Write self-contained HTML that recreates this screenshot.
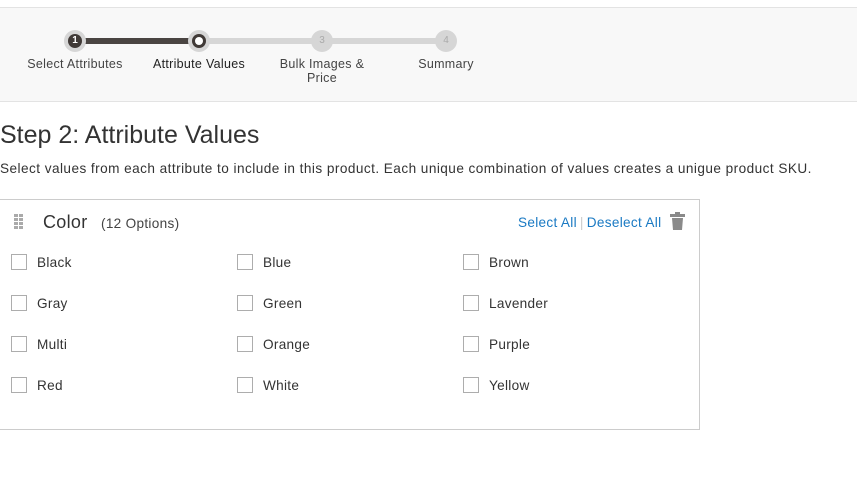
<!DOCTYPE html>
<html><head><meta charset="utf-8"><style>
*{box-sizing:border-box;margin:0;padding:0}
body{width:857px;height:494px;background:#fff;font-family:"Liberation Sans",sans-serif;color:#303030;position:relative;overflow:hidden}
.band{position:absolute;left:0;top:7px;width:857px;height:95px;background:#f8f8f8;border-top:1px solid #e3e3e3;border-bottom:1px solid #e3e3e3}
.line{position:absolute;height:6px;top:30px}
.dot{position:absolute;width:22px;height:22px;border-radius:50%;top:22px;background:#d6d6d6}
.dot i{position:absolute;left:4px;top:4px;width:14px;height:14px;border-radius:50%;background:#403a37;color:#fff;font-style:normal;font-size:10px;font-weight:bold;text-align:center;line-height:14px}
.lbl{position:absolute;top:49px;font-size:12.5px;color:#444;text-align:center;width:124px;line-height:14px;letter-spacing:0.3px}
h1{position:absolute;left:0;top:121px;font-size:25px;font-weight:normal;color:#333}
.desc{position:absolute;left:0;top:161px;font-size:13.6px;color:#333;letter-spacing:0.45px;white-space:nowrap}
.box{position:absolute;left:0;top:199px;width:700px;height:231px;border:1px solid #ccc;border-left:none}
.cb{position:absolute;width:16px;height:16px;border:1px solid #adadad;background:#fff}
.opt{position:absolute;font-size:13.6px;color:#333;letter-spacing:0.3px}
a{color:#1979c3;text-decoration:none}
</style></head><body>
<div class="band">
<div class="line" style="left:75px;width:124px;background:#4a4542"></div>
<div class="line" style="left:199px;width:247px;background:#d6d6d6"></div>
<div class="dot" style="left:64px"><i>1</i></div>
<div class="dot" style="left:188px"><i style="background:#403a37"><b style="position:absolute;left:3px;top:3px;width:8px;height:8px;border-radius:50%;background:#fff"></b></i></div>
<div class="dot" style="left:311px"><i style="background:#d6d6d6;color:#aaa;font-weight:normal">3</i></div>
<div class="dot" style="left:435px"><i style="background:#d6d6d6;color:#aaa;font-weight:normal">4</i></div>
<div class="lbl" style="left:13px">Select Attributes</div>
<div class="lbl" style="left:137px;color:#222">Attribute Values</div>
<div class="lbl" style="left:260px">Bulk Images &amp;<br>Price</div>
<div class="lbl" style="left:384px">Summary</div>
</div>
<h1>Step 2: Attribute Values</h1>
<div class="desc">Select values from each attribute to include in this product. Each unique combination of values creates a unigue product SKU.</div>
<div class="box">
<svg style="position:absolute;left:14px;top:14px" width="10" height="18"><g fill="#aaa"><rect x="0" y="0" width="4" height="3"/><rect x="5" y="0" width="4" height="3"/><rect x="0" y="4" width="4" height="3"/><rect x="5" y="4" width="4" height="3"/><rect x="0" y="8" width="4" height="3"/><rect x="5" y="8" width="4" height="3"/><rect x="0" y="12" width="4" height="3"/><rect x="5" y="12" width="4" height="3"/></g></svg>
<div class="opt" style="left:43px;top:12px;font-size:18px">Color</div>
<div class="opt" style="left:101px;top:16px;font-size:13.6px;color:#444">(12 Options)</div>
<div class="opt" style="left:518px;top:15px"><a>Select All</a><span style="color:#ccc;margin:0 3px">|</span><a>Deselect All</a></div>
<svg style="position:absolute;left:670px;top:12px" width="15" height="19"><rect x="0" y="2" width="15" height="3" fill="#8a8a8a"/><rect x="5" y="0" width="5" height="3" fill="#8a8a8a"/><path d="M2 6h11l-1 12H3z" fill="#8a8a8a"/></svg>
</div>
<div id="opts"></div>
<script>
var n=[["Black","Blue","Brown"],["Gray","Green","Lavender"],["Multi","Orange","Purple"],["Red","White","Yellow"]];
var h="",xs=[11,237,463];
n.forEach(function(r,i){r.forEach(function(t,j){var y=254+i*41;h+='<div class="cb" style="left:'+xs[j]+'px;top:'+y+'px"></div><div class="opt" style="left:'+(xs[j]+26)+'px;top:'+(y+1)+'px">'+t+'</div>';});});
document.getElementById("opts").innerHTML=h;
</script>
</body></html>
